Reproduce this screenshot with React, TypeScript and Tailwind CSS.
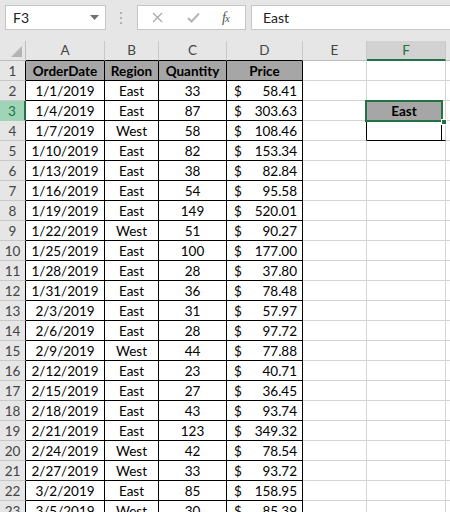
import React from 'react';

type Row = [string, string, number, string];

const rows: Row[] = [
  ['1/1/2019', 'East', 33, '58.41'],
  ['1/4/2019', 'East', 87, '303.63'],
  ['1/7/2019', 'West', 58, '108.46'],
  ['1/10/2019', 'East', 82, '153.34'],
  ['1/13/2019', 'East', 38, '82.84'],
  ['1/16/2019', 'East', 54, '95.58'],
  ['1/19/2019', 'East', 149, '520.01'],
  ['1/22/2019', 'West', 51, '90.27'],
  ['1/25/2019', 'East', 100, '177.00'],
  ['1/28/2019', 'East', 28, '37.80'],
  ['1/31/2019', 'East', 36, '78.48'],
  ['2/3/2019', 'East', 31, '57.97'],
  ['2/6/2019', 'East', 28, '97.72'],
  ['2/9/2019', 'West', 44, '77.88'],
  ['2/12/2019', 'East', 23, '40.71'],
  ['2/15/2019', 'East', 27, '36.45'],
  ['2/18/2019', 'East', 43, '93.74'],
  ['2/21/2019', 'East', 123, '349.32'],
  ['2/24/2019', 'West', 42, '78.54'],
  ['2/27/2019', 'West', 33, '93.72'],
  ['3/2/2019', 'East', 85, '158.95'],
  ['3/5/2019', 'West', 30, '85.39'],
];

function FormulaBar() {
  return (
    <div className="h-[41px] bg-[#e6e6e6] flex items-start pt-[5px] pl-[5px] text-[14px]">
      {/* name box */}
      <div className="w-[101px] h-[25px] bg-white border border-[#c6c6c6] flex items-center justify-between pl-[7px] pr-[6px] text-[#222]">
        <span>F3</span>
        <svg width="9" height="5" viewBox="0 0 9 5">
          <path d="M0 0 L9 0 L4.5 5 Z" fill="#707070" />
        </svg>
      </div>
      <div className="w-[31px] h-[25px] flex items-center justify-center">
        <svg width="3" height="12" viewBox="0 0 3 12">
          <rect x="0" y="0" width="2" height="2" fill="#b0b0b0" />
          <rect x="0" y="5" width="2" height="2" fill="#b0b0b0" />
          <rect x="0" y="10" width="2" height="2" fill="#b0b0b0" />
        </svg>
      </div>
      {/* cancel / enter / fx */}
      <div className="w-[109px] h-[25px] bg-white border border-[#c6c6c6] flex items-center">
        <div className="w-[38px] flex justify-center">
          <svg width="11" height="11" viewBox="0 0 11 11">
            <path d="M1 1 L10 10 M10 1 L1 10" stroke="#a8a8a8" strokeWidth="1.3" />
          </svg>
        </div>
        <div className="w-[34px] flex justify-center">
          <svg width="13" height="11" viewBox="0 0 13 11">
            <path d="M1 6 L4.5 9.5 L12 1.5" stroke="#b4b4b4" strokeWidth="2" fill="none" />
          </svg>
        </div>
        <div className="flex-1 flex justify-center pr-[4px]">
          <span className="font-['Liberation_Serif',serif] italic text-[14px] text-[#555] tracking-[-1px]">
            f<span className="text-[11px]">x</span>
          </span>
        </div>
      </div>
      {/* formula input */}
      <div className="flex-1 ml-[5px] h-[25px] bg-white border border-[#c6c6c6] border-r-0 flex items-center pl-[11px] text-[#222]">
        East
      </div>
    </div>
  );
}

const colW = ['w-[26px]', 'w-[79px]', 'w-[54px]', 'w-[68px]', 'w-[76px]', 'w-[64px]', 'w-[79px]'];

function ColumnHeaders() {
  const letters = ['A', 'B', 'C', 'D', 'E', 'F'];
  return (
    <div className="flex h-[20px] bg-[#e6e6e6] text-[#444]">
      <div className={`${colW[0]} shrink-0 h-full border-r border-b border-[#bdbdbd] relative`}>
        <svg className="absolute right-[3px] bottom-[3px]" width="11" height="11" viewBox="0 0 11 11">
          <path d="M11 0 L11 11 L0 11 Z" fill="#b4b4b4" />
        </svg>
      </div>
      {letters.map((l, i) => {
        const tableCol = i < 4;
        const selected = l === 'F';
        return (
          <div
            key={l}
            className={`${colW[i + 1]} shrink-0 h-full border-r border-[#c8c8c8] flex items-center justify-center pt-[1px] ${
              selected
                ? 'bg-[#d2d2d2] text-[#217346] border-b-2 border-b-[#217346]'
                : tableCol
                ? 'border-b border-b-black'
                : 'border-b border-b-[#bdbdbd]'
            }`}
          >
            {l}
          </div>
        );
      })}
      <div className="flex-1 h-full border-b border-[#bdbdbd]" />
    </div>
  );
}

function RowHeader({ n }: { n: number }) {
  const selected = n === 3;
  return (
    <div
      className={`${colW[0]} shrink-0 h-full border-b flex items-center justify-center pt-[2px] ${
        selected
          ? 'bg-[#9fd5b7] text-[#217346] border-r-2 border-r-[#217346] border-b-[#9fd5b7]'
          : 'bg-[#e6e6e6] text-[#444] border-r border-r-black border-b-[#c8c8c8]'
      }`}
    >
      {n}
    </div>
  );
}

function HeaderRow() {
  const names = ['OrderDate', 'Region', 'Quantity', 'Price'];
  return (
    <div className="flex h-[20px]">
      <RowHeader n={1} />
      {names.map((t, i) => (
        <div
          key={t}
          className={`${colW[i + 1]} shrink-0 h-full bg-[#a6a6a6] border-r border-b border-black flex items-center justify-center pt-[2px] font-bold text-black`}
        >
          {t}
        </div>
      ))}
      <div className={`${colW[5]} shrink-0 h-full border-r border-b border-[#d4d4d4]`} />
      <div className={`${colW[6]} shrink-0 h-full border-r border-b border-[#d4d4d4]`} />
      <div className="flex-1 h-full border-b border-[#d4d4d4]" />
    </div>
  );
}

function DataRow({ row, n }: { row: Row; n: number }) {
  const [date, region, qty, price] = row;
  const boxed = n === 3 || n === 4;
  return (
    <div className="flex h-[20px] text-black">
      <RowHeader n={n} />
      <div className={`${colW[1]} shrink-0 h-full border-r border-b border-black flex items-center justify-center pt-[2px]`}>
        {date}
      </div>
      <div className={`${colW[2]} shrink-0 h-full border-r border-b border-black flex items-center justify-center pt-[2px]`}>
        {region}
      </div>
      <div className={`${colW[3]} shrink-0 h-full border-r border-b border-black flex items-center justify-center pt-[2px]`}>
        {qty}
      </div>
      <div className={`${colW[4]} shrink-0 h-full border-r border-b border-black flex items-center justify-between pt-[2px] pl-[7px] pr-[5px]`}>
        <span>$</span>
        <span>{price}</span>
      </div>
      <div
        className={`${colW[5]} shrink-0 h-full border-r border-b border-[#d4d4d4] ${
          boxed ? 'border-r-black' : ''
        }`}
      />
      <div className={`${colW[6]} shrink-0 h-full border-r border-b border-[#d4d4d4] ${boxed ? 'border-b-black' : ''}`}>
        {n === 3 && (
          <div className="w-[75px] h-full bg-[#a6a6a6] border-r border-black flex items-center justify-center pt-[2px] font-bold">
            East
          </div>
        )}
        {n === 4 && <div className="w-[75px] h-full border-r border-black" />}
      </div>
      <div className="flex-1 h-full border-b border-[#d4d4d4]" />
    </div>
  );
}

export default function App() {
  return (
    <div className="w-[450px] h-[512px] overflow-hidden bg-white font-['Lato','Noto_Sans',sans-serif] text-[13.5px] leading-none">
      <FormulaBar />
      <div className="relative">
        <ColumnHeaders />
        <HeaderRow />
        {rows.map((r, i) => (
          <DataRow key={i} row={r} n={i + 2} />
        ))}
        {/* active cell outline */}
        <div className="absolute left-[365px] top-[59px] w-[78px] h-[22px] border-2 border-[#217346]" />
        <div className="absolute left-[441px] top-[78px] w-[6px] h-[6px] bg-[#217346] border border-white" />
      </div>
    </div>
  );
}
